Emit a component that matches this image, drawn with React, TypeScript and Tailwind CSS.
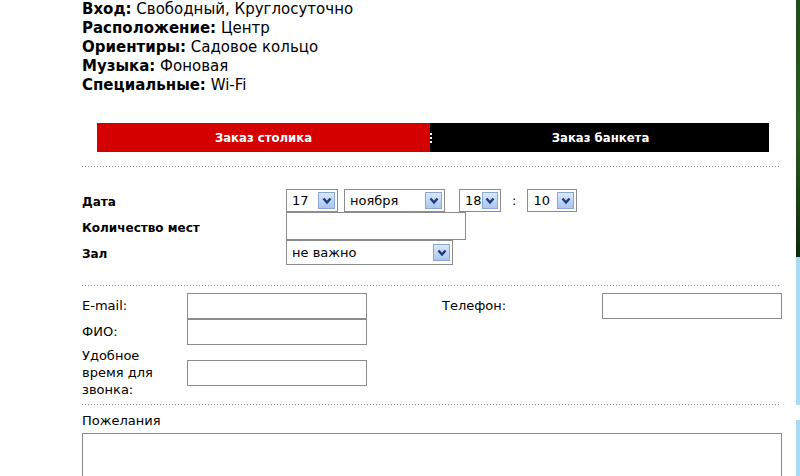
import React from "react";

const font = { fontFamily: "Tahoma, 'DejaVu Sans', sans-serif" };

function Arrow() {
  return (
    <span className="flex h-[17px] w-[17px] items-center justify-center border border-[#8aa7d6] bg-gradient-to-b from-[#dbe8fb] to-[#a9c5ef]">
      <svg width="10" height="8" viewBox="0 0 10 8">
        <path d="M1.5 1.5 L5 5.5 L8.5 1.5" fill="none" stroke="#1d3a7a" strokeWidth="2.4" />
      </svg>
    </span>
  );
}

function FakeSelect({ value, className }: { value: string; className: string }) {
  return (
    <div className={`flex items-center justify-between border border-[#8c8c8c] bg-white pl-[5px] pr-[2px] text-[13px] font-normal text-black ${className}`}>
      <span>{value}</span>
      <Arrow />
    </div>
  );
}

function Field({ className }: { className: string }) {
  return <div className={`border border-[#8c8c8c] bg-white ${className}`} />;
}

function Dots({ className }: { className: string }) {
  return (
    <div className={`h-px bg-[linear-gradient(to_right,#8a8a8a_1px,transparent_1px)] bg-[length:3px_1px] ${className}`} />
  );
}

const info: [string, string][] = [
  ["Вход:", "Свободный, Круглосуточно"],
  ["Расположение:", "Центр"],
  ["Ориентиры:", "Садовое кольцо"],
  ["Музыка:", "Фоновая"],
  ["Специальные:", "Wi-Fi"],
];

export default function App() {
  return (
    <div className="flex h-[476px] w-[800px] overflow-hidden bg-white text-black" style={font}>
      <div className="w-[796px] pl-[82px] pr-[14px]">
        <div className="text-[15px] leading-[19px]">
          {info.map(([k, v]) => (
            <div key={k}>
              <b>{k}</b> {v}
            </div>
          ))}
        </div>

        <div
          className="ml-[15px] mt-[28px] flex h-[29px] w-[672px] text-[13px] font-bold text-white"
          style={{ fontFamily: "'Liberation Sans Narrow', 'DejaVu Sans Condensed', sans-serif" }}
        >
          <div className="flex w-[333px] items-center justify-center bg-[#d40000]">Заказ столика</div>
          <div className="flex w-[2px] flex-col items-center justify-center gap-[2px] bg-black">
            <span className="h-[2px] w-[2px] bg-white" />
            <span className="h-[2px] w-[2px] bg-white" />
            <span className="h-[2px] w-[2px] bg-white" />
          </div>
          <div className="flex flex-1 items-center justify-center bg-black">Заказ банкета</div>
        </div>

        <Dots className="mt-[14px] w-[698px]" />

        <div className="grid grid-cols-[204px_1fr] pt-[22px] text-[12px] font-bold">
          <div className="flex h-[23px] items-center pt-[3px]">Дата</div>
          <div className="flex items-center font-normal">
            <FakeSelect value="17" className="h-[23px] w-[52px]" />
            <FakeSelect value="ноября" className="ml-[6px] h-[23px] w-[101px]" />
            <FakeSelect value="18" className="ml-[14px] h-[23px] w-[42px]" />
            <span className="mx-[11px] text-[13px]">:</span>
            <FakeSelect value="10" className="h-[23px] w-[50px]" />
          </div>
          <div className="flex h-[28px] items-center pt-[4px]">Количество мест</div>
          <div>
            <Field className="h-[28px] w-[180px]" />
          </div>
          <div className="flex h-[25px] items-center pt-[2px]">Зал</div>
          <div>
            <FakeSelect value="не важно" className="h-[25px] w-[167px]" />
          </div>
        </div>

        <Dots className="mt-[20px] w-[698px]" />

        <div className="pt-[7px] text-[13px]">
          <div className="flex h-[26px] items-center">
            <span className="w-[105px]">E-mail:</span>
            <Field className="h-[26px] w-[180px]" />
            <span className="ml-[75px] w-[160px]">Телефон:</span>
            <Field className="h-[26px] w-[180px]" />
          </div>
          <div className="flex h-[26px] items-center">
            <span className="w-[105px]">ФИО:</span>
            <Field className="h-[26px] w-[180px]" />
          </div>
          <div className="flex items-center pt-[2px]">
            <span className="w-[105px] leading-[17px]">
              Удобное
              <br />
              время для
              <br />
              звонка:
            </span>
            <Field className="h-[26px] w-[180px]" />
          </div>
        </div>

        <Dots className="mt-[6px] w-[698px]" />

        <div className="pt-[7px] text-[13px] leading-[17px]">Пожелания</div>
        <Field className="mt-[4px] h-[60px] w-[700px]" />
      </div>

      <div className="flex w-[4px] flex-col">
        <div className="h-[257px] bg-gradient-to-b from-[#1f4a1a] via-[#2d5a22] to-[#0d2a0c]" />
        <div className="h-[148px] bg-[#a9dcf4]" />
        <div className="h-[15px] bg-white" />
        <div className="flex-1 bg-[#a9dcf4]" />
      </div>
    </div>
  );
}
